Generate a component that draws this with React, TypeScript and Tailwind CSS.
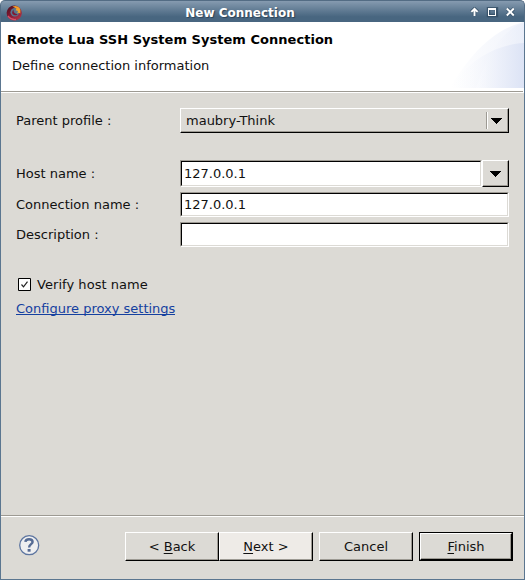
import type { ReactNode } from 'react';

const raised =
  'border border-t-white border-l-white border-r-black border-b-black shadow-[inset_-1px_-1px_0_#9d9a93]';

function Arrow() {
  return (
    <svg width="11" height="6" viewBox="0 0 11 6" shapeRendering="crispEdges">
      <path d="M0 0H11V1H10V2H9V3H8V4H7V5H6V6H5V5H4V4H3V3H2V2H1V1H0Z" fill="#000" />
    </svg>
  );
}

function Field({ value, className }: { value: string; className: string }) {
  return (
    <div className={`border border-t-[#9d9a93] border-l-[#9d9a93] border-r-white border-b-white ${className}`}>
      <div className="flex h-full items-center border border-t-black border-l-black border-r-[#dcdad5] border-b-[#dcdad5] bg-white pl-[2px]">
        {value}
      </div>
    </div>
  );
}

function Label({ children }: { children: ReactNode }) {
  return <div className="w-[164px] shrink-0">{children}</div>;
}

function Logo() {
  return (
    <svg width="16" height="16" viewBox="0 0 16 16">
      <defs>
        <linearGradient id="ring" x1="0" y1="0" x2=".8" y2="1">
          <stop offset="0" stopColor="#43101c" />
          <stop offset=".45" stopColor="#7d1730" />
          <stop offset="1" stopColor="#b43548" />
        </linearGradient>
      </defs>
      <circle cx="8.2" cy="8" r="7.6" fill="url(#ring)" />
      <path d="M2 11Q5 15 10 14.5" fill="none" stroke="#d4536a" strokeWidth="1.3" />
      <circle cx="8.8" cy="7.2" r="4.3" fill="#58768e" />
      <path d="M7.5 4.5Q7 8.5 11.8 9.4Q9 11 7 9.6Q5 7.5 7.5 4.5Z" fill="#7d1a34" />
      <path d="M6.5 1.5Q11 0 13.6 3Q15.3 5 14.3 8.6L12.6 7.8L11.2 8.6L12 6L9.6 5.2L10.4 3.6Z" fill="#f0a02c" />
    </svg>
  );
}

export default function App() {
  return (
    <div className="flex h-[580px] w-[525px] flex-col overflow-hidden bg-white font-['DejaVu_Sans',sans-serif] text-[13px] leading-4 text-[#111]">
      <div className="flex h-[22px] shrink-0 items-center rounded-t-[5px] border border-b-0 border-[#536c84] bg-linear-to-b from-[#869bb0] to-[#486680] to-75% pr-[9px] pl-[5px] pt-[2px]">
        <Logo />
        <div className="flex-1 pr-[12px] text-center text-[12px] font-bold text-white [text-shadow:1px_1px_1px_#2d4356]">
          New Connection
        </div>
        <svg width="45" height="11" viewBox="0 0 45 11">
          <path
            d="M4.5 1.5V9M1.3 4.8L4.5 1.7L7.7 4.8M18.5 1.5H26.5V8.5H18.5ZM37 1.5L44 8.5M44 1.5L37 8.5"
            stroke="#2f4960" strokeOpacity=".75" fill="none" strokeWidth="3.4"
          />
          <path d="M4.5 2V9M1.4 4.9L4.5 1.8L7.6 4.9" fill="none" stroke="#fff" strokeWidth="1.9" />
          <path d="M18 1H26V9H18ZM19 3V8H25V3Z" fill="#fff" fillRule="evenodd" shapeRendering="crispEdges" />
          <path d="M36.8 1.5L43.8 8.5M43.8 1.5L36.8 8.5" fill="none" stroke="#fff" strokeWidth="2" />
        </svg>
      </div>
      <div className="flex min-h-0 flex-1 flex-col border border-t-0 border-[#5b7690] bg-[#dcdad5]">
        <div className="flex h-[71px] shrink-0 justify-between border-b border-b-white bg-white">
          <div className="flex-1">
            <h1 className="pt-[10px] pl-[6px] text-[13px] leading-4 font-bold tracking-[0.03px] text-black">
              Remote Lua SSH System System Connection
            </h1>
            <p className="pt-[10px] pl-[11px]">Define connection information</p>
          </div>
          <svg width="74" height="66" viewBox="0 0 74 66">
            <defs>
              <linearGradient id="sky">
                <stop offset="0" stopColor="#fff" />
                <stop offset="1" stopColor="#e6ebf8" />
              </linearGradient>
              <linearGradient id="hill">
                <stop offset="0" stopColor="#fff" stopOpacity="0" />
                <stop offset="1" stopColor="#dce3f5" />
              </linearGradient>
            </defs>
            <path d="M0 66C14 43 37 9 74 0V66Z" fill="url(#sky)" opacity=".6" />
            <path d="M26 66C38 29 53 9 74 0V66Z" fill="url(#sky)" opacity=".6" />
            <path d="M0 66C16 42 41 23 74 21V66Z" fill="url(#hill)" />
          </svg>
        </div>
        <div className="-mt-[2px] mr-px h-px shrink-0 bg-[#9d9a93]" />
        <div className="mt-px flex flex-1 flex-col pl-[15px]">
          <div className="mt-[15px] flex h-[25px] items-center">
            <Label>Parent profile :</Label>
            <div className={`flex h-[25px] w-[329px] items-center pl-[5px] ${raised}`}>
              <span className="flex-1">maubry-Think</span>
              <div className="mr-[3px] h-[17px] w-[2px] border-l border-l-[#9d9a93] bg-white" />
              <div className="mr-[6px]"><Arrow /></div>
            </div>
          </div>
          <div className="mt-[27px] flex h-[27px] items-center">
            <Label>Host name :</Label>
            <Field value="127.0.0.1" className="h-[27px] w-[302px]" />
            <div className={`flex h-[27px] w-[27px] items-center pl-[7px] ${raised}`}>
              <Arrow />
            </div>
          </div>
          <div className="mt-[5px] flex h-[25px] items-center">
            <Label>Connection name :</Label>
            <Field value="127.0.0.1" className="h-[25px] w-[329px]" />
          </div>
          <div className="mt-[5px] flex h-[25px] items-center">
            <Label>Description :</Label>
            <Field value="" className="h-[25px] w-[329px]" />
          </div>
          <div className="mt-[29px] flex h-[17px] items-center pl-[2px]">
            <svg width="13" height="13" viewBox="0 0 13 13">
              <path d="M.5 .5H12.5V12.5H.5Z" fill="#fff" stroke="#000" />
              <path d="M3.5 6.5L5.5 8.8L9.5 3.7" fill="none" stroke="#222" strokeWidth="1.2" />
            </svg>
            <span className="pl-[6px] tracking-[0.05px]">Verify host name</span>
          </div>
          <a className="mt-[8px] h-[14px] self-start border-b border-b-[#1440a0] text-[#1440a0]">
            Configure proxy settings
          </a>
        </div>
        <div className="h-[2px] shrink-0 border-t border-t-[#9d9a93] bg-white" />
        <div className="flex h-[62px] shrink-0 items-start pt-[15px] pl-[18px]">
          <svg className="mt-[3px] mr-[85px]" width="21" height="21" viewBox="0 0 21 21">
            <circle cx="10.2" cy="10.2" r="9.5" fill="#efeff0" stroke="#5d75a0" strokeWidth="1.3" />
            <path d="M6.4 6.9C6.6 3.3 13.6 3.3 13.6 6.9C13.6 9.2 10.1 9.2 10.1 12.4" fill="none" stroke="#566b94" strokeWidth="2.4" />
            <path d="M8.6 14H11.6V16.7H8.6Z" fill="#566b94" />
          </svg>
          <div className={`flex h-[29px] w-[94px] items-center justify-center ${raised}`}>
            <span>&lt; <u className="underline-offset-2">B</u>ack</span>
          </div>
          <div className={`flex h-[29px] w-[94px] items-center justify-center bg-[#eeebe7] ${raised}`}>
            <span><u className="underline-offset-2">N</u>ext &gt;</span>
          </div>
          <div className={`ml-[6px] flex h-[29px] w-[94px] items-center justify-center ${raised}`}>
            Cancel
          </div>
          <div className="ml-[6px] h-[29px] w-[94px] border border-black">
            <div className={`flex h-full items-center justify-center ${raised}`}>
              <span><u className="underline-offset-2">F</u>inish</span>
            </div>
          </div>
        </div>
      </div>
    </div>
  );
}
